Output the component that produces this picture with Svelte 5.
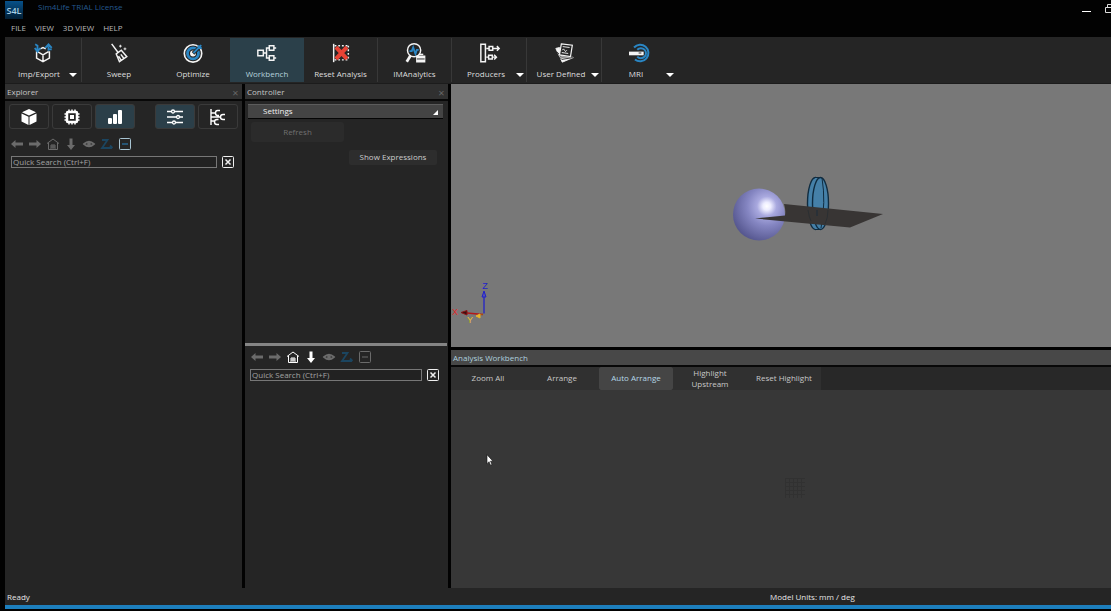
<script lang="ts">
  const menus = ['FILE', 'VIEW', '3D VIEW', 'HELP'];

  const tools = [
    { id: 'io', label: 'Imp/Export', menu: true },
    { id: 'sweep', label: 'Sweep' },
    { id: 'optimize', label: 'Optimize' },
    { id: 'workbench', label: 'Workbench' },
    { id: 'reset', label: 'Reset Analysis' },
    { id: 'ima', label: 'IMAnalytics' },
    { id: 'producers', label: 'Producers', menu: true },
    { id: 'user', label: 'User Defined', menu: true },
    { id: 'mri', label: 'MRI', menu: true }
  ];

  const actions = ['Zoom All', 'Arrange', 'Auto Arrange', 'Highlight Upstream', 'Reset Highlight'];

  let activeTool = $state('workbench');
  let activeAction = $state('Auto Arrange');
  let explorerSearch = $state('');
  let controllerSearch = $state('');
</script>

{#snippet toolIcon(id: string)}
  <svg class="tool-icon" viewBox="0 0 24 24" fill="none" stroke="#f4f4f4" stroke-width="1.6" aria-hidden="true">
    {#if id === 'io'}
      <path d="M9 7.5 12 6l3 1.500M5 10v7.500l7 4 7-4V10M6 10.500l6 3.500 6-3.500M12 14v7.500" />
      <path d="M3.500 2.500 6 4v5M3 6.500 6 10.500l3-4M18 9.500V4.500M14.500 6.500 18 2.500l3.500 4M18 8l3.500 0" stroke="#2a86c4" stroke-width="2" />
    {:else if id === 'sweep'}
      <path d="M4 2l7 9.500M9 13l5.500-4 6 7-8 5.500zM11.500 15.500l3 4.500M14 13.500l3 4" />
      <path d="M13.500 3v3M12 4.500h3M18.500 6v3M17 7.500h3" stroke-width="1" />
    {:else if id === 'optimize'}
      <circle cx="12" cy="12.500" r="9.500" stroke-width="1.800" />
      <circle cx="12" cy="12.500" r="6" stroke="#2a86c4" stroke-width="3" />
      <circle cx="12" cy="12.500" r="2.400" fill="#f4f4f4" />
      <path d="M12 12.500 20 5" stroke="#252525" stroke-width="4" />
      <path d="M12.500 12 18 6.500V3.500M18 6.500h3.500M18 6.500l3-3" stroke="#2a86c4" stroke-width="2" />
    {:else if id === 'workbench'}
      <path d="M2 9h6v6H2zM14.500 4h5v5h-5zM14.500 15h5v5h-5zM8 12h3.500M14.500 6.500h-3v11h3M19.500 6.500H22M19.500 17.500H22" />
    {:else if id === 'reset'}
      <path d="M4 2v20" />
      <path d="M5 4h15M5 19.500h15M20 4v15" stroke-dasharray="2 2" />
      <path d="m6.500 5.500 12 13M18.500 5.500l-12 13" stroke="#e84335" stroke-width="4.500" />
    {:else if id === 'ima'}
      <circle cx="11" cy="9" r="7.200" />
      <path d="M6 10h2.500L10 6l2.500 7L14 8.500h2" stroke="#2a86c4" stroke-width="2" />
      <path d="m7 15-4 6.500" stroke-width="3" />
      <path d="M14 15.500h8.500v6H14z" fill="#f4f4f4" />
      <path d="M14 18.500h8.500" stroke="#252525" stroke-width="1" />
      <path d="M16 13.500h5" />
    {:else if id === 'producers'}
      <path d="M2 2.500h5v19H2zM8 7h3M11 5h4v4h-4zM15 7h7M19.500 4.500 22 7l-2.500 2.500M8 16.500h2.500M10.500 14.500h4v4h-4zM14.500 16.500h4M16.500 14l2.500 2.500L16.500 19" />
    {:else if id === 'user'}
      <path d="M2 7l4-1 2 9 11 1 2 1-12 5z" fill="#f4f4f4" stroke-width="1" />
      <path d="M3.500 11 8 16.500l12-.5M5 15.500l3.500 3.500 12-2" stroke="#252525" stroke-width="1" />
      <path d="m8 2 12 1.500-2 12.500-12-2z" fill="#252525" stroke-width="1.300" />
      <path d="M9.500 5l7.500 1M9 9q1.500-3 2.500 0t2.500 0M8.500 11.500l7 1" stroke-width="1" />
    {:else}
      <path d="M5.500 6a9 9 0 1 1 1 13M9 8.500a5.500 5.500 0 1 1 0 7.500" stroke="#2a86c4" stroke-width="2.200" />
      <path d="M0 12.500h16" stroke-width="4" />
      <path d="M10.500 12h3" stroke="#252525" stroke-width="1" />
    {/if}
  </svg>
{/snippet}

{#snippet treeTools(current: string)}
  <div class="tree-tools {current}">
    <button aria-label="Back"><svg viewBox="0 0 14 14"><path d="M1 7l4.500-4v2.500H13v3H5.500V11z" fill="currentColor" /></svg></button>
    <button aria-label="Forward"><svg viewBox="0 0 14 14"><path d="M13 7 8.500 3v2.500H1v3h7.500V11z" fill="currentColor" /></svg></button>
    <button class="nav" aria-label="Home"><svg viewBox="0 0 14 14" fill="none" stroke="currentColor"><path d="M1 6.500 7 2l6 4.500M2.500 6v6.500h9V6M5 12V8h4v4M5 10h4M7 8v4" /></svg></button>
    <button class="nav" aria-label="Go down"><svg viewBox="0 0 14 14"><path d="M5.500 1.500h3V8H11l-4 5-4-5h2.500z" fill="currentColor" /></svg></button>
    <button aria-label="Visibility"><svg viewBox="0 0 14 14" fill="none" stroke="currentColor" stroke-width="1.800"><path d="M2 7q5-4.500 10 0-5 4.500-10 0z" /><circle cx="7" cy="7" r="1" /></svg></button>
    <button class="sort" aria-label="Sort"><svg viewBox="0 0 14 14" fill="none" stroke="currentColor" stroke-width="1.800"><path d="M2 3h5.500L2 11h10M10 8.500l2.500 2.500" /></svg></button>
    <button class="collapse" aria-label="Collapse all"><svg viewBox="0 0 14 14" fill="none" stroke="currentColor"><rect x="1.500" y="1.500" width="11" height="11" rx="1" /><path class="dash" d="M4 7h6" /></svg></button>
  </div>
{/snippet}

{#snippet clearIcon()}
  <svg viewBox="0 0 12 12" fill="none" stroke="#f0f0f0"><rect x=".5" y=".5" width="11" height="11" rx="1" /><path d="m3.500 3.500 5 5M8.500 3.500l-5 5" stroke-width="1.500" /></svg>
{/snippet}

<div class="app">
  <header class="title-bar">
    <svg class="logo" viewBox="0 0 18 18" aria-hidden="true">
      <defs>
        <linearGradient id="logo-fill" x2="0" y2="1">
          <stop offset="0" stop-color="#07518a" />
          <stop offset="1" stop-color="#021f35" />
        </linearGradient>
      </defs>
      <rect width="18" height="18" fill="url(#logo-fill)" />
      <text x="9" y="13" text-anchor="middle">S4L</text>
    </svg>
    <span class="title">Sim4Life TRIAL License</span>
    <button class="window-button" aria-label="Minimize"><svg viewBox="0 0 12 12"><path d="M2 7.500h9" stroke="#fff" /></svg></button>
    <button class="window-button restore" aria-label="Restore"><svg viewBox="0 0 12 12" fill="none" stroke="#ddd"><path d="M1.500 3.500h6v5h-6zM3.500 3V.5h6V6H8" /></svg></button>
  </header>

  <nav class="menu-bar">
    {#each menus as menu}
      <button>{menu}</button>
    {/each}
  </nav>

  <div class="toolbar">
    {#each tools as tool}
      <button class="tool {tool.id}" class:menu={tool.menu} class:active={activeTool === tool.id} onclick={() => (activeTool = tool.id)}>
        {@render toolIcon(tool.id)}
        <span>{tool.label}</span>
        {#if tool.menu}<i class="caret"></i>{/if}
      </button>
    {/each}
  </div>

  <main>
    <section class="panel">
      <h2>Explorer <button class="close" aria-label="Close Explorer">×</button></h2>
      <div class="tabs">
        <button aria-label="Model"><svg viewBox="0 0 18 18" fill="#fff"><path d="M9 1l7 3.300-7 3.200-7-3.200zM1.500 5.500l7 3.200V17l-7-3.500zM16.500 5.500l-7 3.200V17l7-3.500z" /></svg></button>
        <button aria-label="Simulation"><svg viewBox="0 0 18 18" fill="none" stroke="#fff"><rect x="4" y="4" width="10" height="10" rx="1" stroke-width="2.500" /><rect x="7.500" y="7.500" width="3" height="3" fill="#fff" /><path d="M6 1.500v2M9 1.500v2M12 1.500v2M6 14.500v2M9 14.500v2M12 14.500v2M1.500 6h2M1.500 9h2M1.500 12h2M14.500 6h2M14.500 9h2M14.500 12h2" stroke-width="1.500" /></svg></button>
        <button class="active" aria-label="Analysis"><svg viewBox="0 0 18 18" fill="#fff"><rect x="2" y="10" width="4" height="6" rx="1" /><rect x="7" y="6" width="4" height="10" rx="1" /><rect x="12" y="2" width="4" height="14" rx="1" /></svg></button>
        <button class="active spaced" aria-label="Properties"><svg viewBox="0 0 18 18" fill="none" stroke="#fff" stroke-width="1.300"><path d="M1 3.500h4M9 3.500h8M1 9h9M14 9h3M1 14.500h5M10 14.500h7" /><circle cx="7" cy="3.500" r="1.500" /><circle cx="12" cy="9" r="1.500" /><circle cx="8" cy="14.500" r="1.500" /></svg></button>
        <button aria-label="Tree"><svg viewBox="0 0 18 18" fill="none" stroke="#fff" stroke-width="1.400"><path d="M2 1v16M2 5h4M2 9h9M2 13h3M11 2.500H8.500q-2 0-2 2.500t2 2.500H10M16 6.500h-2q-2.500 0-2.500 2.500t2.500 2.500h2M9.500 11.500H8q-2.500 0-2.500 2.500T8 16.500h2" /></svg></button>
      </div>
      {@render treeTools('explorer-tree')}
      <div class="search">
        <input bind:value={explorerSearch} placeholder="Quick Search (Ctrl+F)" aria-label="Quick search in Explorer" />
        <button aria-label="Clear search" onclick={() => (explorerSearch = '')}>{@render clearIcon()}</button>
      </div>
    </section>

    <section class="panel controller">
      <div class="controls">
        <h2>Controller <button class="close" aria-label="Close Controller">×</button></h2>
        <button class="settings">Settings <svg viewBox="0 0 6 6"><path d="M6 0v6H0z" fill="#fff" /></svg></button>
        <button class="refresh" disabled>Refresh</button>
        <button class="expressions">Show Expressions</button>
      </div>
      <div class="splitter"></div>
      <div class="tree">
        {@render treeTools('controller-tree')}
        <div class="search">
          <input bind:value={controllerSearch} placeholder="Quick Search (Ctrl+F)" aria-label="Quick search in Controller" />
          <button aria-label="Clear search" onclick={() => (controllerSearch = '')}>{@render clearIcon()}</button>
        </div>
      </div>
    </section>

    <div class="workspace">
      <section class="viewport" aria-label="3D view">
        <svg viewBox="0 0 660 263" preserveAspectRatio="xMidYMid slice">
          <defs>
            <radialGradient id="ball" cx="0.65" cy="0.34" r="0.75">
              <stop offset="0" stop-color="#ffffff" />
              <stop offset="0.1" stop-color="#ededff" />
              <stop offset="0.25" stop-color="#a9a9df" />
              <stop offset="0.5" stop-color="#8586c2" />
              <stop offset="1" stop-color="#505189" />
            </radialGradient>
          </defs>
          <g fill="#4580a8" stroke="#102c40" stroke-width="1.400">
            <ellipse cx="364.500" cy="119.500" rx="8" ry="26" />
            <path d="M364 93.500h6v52h-6z" stroke="none" />
            <ellipse cx="369.500" cy="119.500" rx="8" ry="26" />
            <path d="M364 93.500h6M364 145.500h6M371 94q4 24-1 50" fill="none" stroke-width="1" />
          </g>
          <circle cx="308" cy="130.500" r="26" fill="url(#ball)" />
          <path d="M304 134.500 334 131.500Q335 126 333 120L432 130 399 143.500z" fill="#383534" />
          <path d="M357 126q1 7 3 11M377 126q0 8-3 14" stroke="#2b2f32" fill="none" />
          <path d="M366 126v6" stroke="#1b2c3a" />
          <g class="axes">
            <path d="M33 229.500V208" stroke="#2222c8" stroke-width="1.300" />
            <path d="M33 207l2 6h-4z" fill="#5555b0" stroke="#2222c8" />
            <path d="M32 230.500 16 229" stroke="#b51818" stroke-width="1.500" />
            <path d="M10 228.500l6-2v4.500z" fill="#3a1010" stroke="#8c1515" />
            <path d="M32 230l-4 1.500" stroke="#a85b10" />
            <path d="M25 232l4-2v4z" fill="#e8b529" stroke="#e8b529" />
            <text x="4" y="231" text-anchor="middle" fill="#e02828">X</text>
            <text x="34" y="205" text-anchor="middle" fill="#2222c8">Z</text>
            <text x="19" y="239" text-anchor="middle" fill="#e8c02a">Y</text>
          </g>
        </svg>
      </section>
      <section class="analysis">
        <h2>Analysis Workbench</h2>
        <div class="actions">
          {#each actions as action}
            <button class:active={activeAction === action} onclick={() => (activeAction = action)}>{action}</button>
          {/each}
        </div>
        <div class="canvas">
          <div class="grid-mark"></div>
          <svg class="pointer" viewBox="0 0 8 12"><path d="M1 .7v9l2-2 1.500 3.500 1.500-.7L4.500 7.200H7z" fill="#fff" stroke="#111" stroke-width=".6" /></svg>
        </div>
      </section>
    </div>
  </main>

  <footer>
    <span>Ready</span>
    <span>Model Units: mm / deg</span>
  </footer>
</div>

<style>
  :global(body) {
    background: #000;
  }

  .app {
    display: grid;
    grid-template-rows: 20px 17px 47px minmax(0, 1fr) 23px;
    height: 100vh;
    padding-left: 5px;
    box-sizing: border-box;
    overflow: hidden;
    background: #020202;
    color: #dedede;
    font: 8px/11px "Open Sans", "Noto Sans", sans-serif;
  }

  button,
  input {
    box-sizing: border-box;
    margin: 0;
    padding: 0;
    border: 0;
    background: none;
    color: inherit;
    font: inherit;
  }

  svg {
    display: block;
  }

  h2 {
    display: flex;
    justify-content: space-between;
    box-sizing: border-box;
    height: 17px;
    margin: 0;
    padding: 2px 2px 0;
    border-bottom: 2px solid #080808;
    background: #303030;
    color: #c4c4c4;
    font-size: 8px;
    font-weight: 400;
  }

  .title-bar {
    display: flex;
    align-items: flex-start;
  }

  .logo {
    width: 18px;
    height: 18px;
    margin-top: 1px;
  }

  .logo text {
    fill: #a8cfe2;
    font: 600 9px "Open Sans", sans-serif;
  }

  .title {
    flex: 1;
    margin: 1px 0 0 15px;
    color: #24598f;
  }

  .window-button {
    width: 12px;
    margin: 4px 12px 0 0;
  }

  .restore {
    width: 7px;
    margin-right: 0;
    overflow: hidden;
  }

  .restore svg {
    width: 12px;
  }

  .menu-bar {
    display: flex;
    align-items: center;
    gap: 9px;
    padding: 0 0 2px 6px;
    color: #b8b8b8;
  }

  .toolbar {
    display: flex;
    border-bottom: 1px solid #1c1c1c;
    background: #252525;
  }

  .tool {
    display: grid;
    grid-template-rows: 28px 13px;
    align-content: start;
    justify-items: center;
    align-items: center;
    width: 74px;
    margin: 1px 0;
    padding-top: 1px;
    white-space: nowrap;
  }

  .tool.menu {
    grid-template-columns: 60px 8px;
    justify-content: start;
    width: 75px;
    padding-left: 4px;
  }

  .tool.menu .tool-icon {
    grid-column: 1 / 3;
  }

  .tool.io {
    width: 77px;
    border-right: 1px solid #383838;
  }

  .reset,
  .ima,
  .producers,
  .user {
    border-right: 1px solid #383838;
  }

  .tool.active {
    background: #2b404a;
    color: #b6d2dd;
  }

  .tool-icon {
    width: 22px;
    height: 22px;
  }

  .caret {
    justify-self: end;
    margin-top: 2px;
    border: 4px solid transparent;
    border-top-color: #fff;
    border-bottom: 0;
  }

  main {
    display: grid;
    grid-template-columns: 237px 203px minmax(0, 1fr);
    gap: 3px;
  }

  .panel {
    background: #252525;
  }

  .close {
    width: 9px;
    color: #666;
    font-size: 11px;
  }

  .tabs {
    display: flex;
    gap: 3px;
    padding: 3px 0 0 4px;
  }

  .tabs button {
    display: grid;
    place-items: center;
    width: 40px;
    height: 25px;
    border: 1px solid #3a3a3a;
    border-radius: 3px;
  }

  .tabs .active {
    background: #2b3f49;
  }

  .tabs .spaced {
    margin-left: 17px;
  }

  .tabs svg {
    width: 18px;
    height: 18px;
  }

  .tree-tools {
    display: flex;
    gap: 4px;
    padding: 8px 0 5px 5px;
    color: #6b6b6b;
  }

  .tree-tools button,
  .tree-tools svg {
    width: 14px;
    height: 14px;
  }

  .tree-tools .sort {
    color: #1b4560;
  }

  .explorer-tree .collapse {
    color: #a8c4d2;
  }

  .explorer-tree .dash {
    stroke: #2a86c4;
  }

  .controller-tree {
    padding-top: 4px;
  }

  .controller-tree .nav {
    color: #fff;
  }

  .search {
    display: flex;
    gap: 5px;
    padding: 0 9px 0 5px;
  }

  .search input {
    flex: 1;
    min-width: 0;
    height: 12px;
    padding: 0 1px 2px;
    border: 1px solid #777;
    background: #222;
  }

  .search input::placeholder {
    color: #a2a2a2;
    opacity: 1;
  }

  .search button {
    width: 12px;
    height: 12px;
  }

  .explorer-tree + .search {
    padding: 0 8px 0 6px;
  }

  .controller {
    display: grid;
    grid-template-rows: minmax(0, 259fr) 3px minmax(0, 242fr);
  }

  .controls {
    display: flex;
    flex-direction: column;
  }

  .settings {
    display: flex;
    align-items: center;
    justify-content: space-between;
    height: 15px;
    margin: 3px 5px 0 3px;
    padding: 0 5px 2px 15px;
    border-top: 1px solid #5c5c5c;
    border-bottom: 1px solid #050505;
    background: #444;
    color: #f0f0f0;
  }

  .settings svg {
    width: 5px;
    height: 5px;
    margin-top: 4px;
  }

  .refresh {
    width: 93px;
    height: 20px;
    margin: 3px 0 0 6px;
    padding-bottom: 2px;
    border-radius: 3px;
    background: #2b2b2b;
    color: #707070;
  }

  .expressions {
    align-self: flex-end;
    width: 88px;
    height: 15px;
    margin: 8px 11px 0 0;
    padding-bottom: 2px;
    border-radius: 2px;
    background: #2d2d2d;
    color: #ccc;
  }

  .splitter {
    margin-right: 1px;
    background: #858585;
  }

  .workspace {
    display: grid;
    grid-template-rows: minmax(0, 263fr) minmax(0, 238fr);
    gap: 3px;
  }

  .viewport {
    background: #787878;
  }

  .viewport svg {
    width: 100%;
    height: 100%;
  }

  .axes text {
    font: 9px "Liberation Sans", Arial, sans-serif;
  }

  .analysis {
    display: flex;
    flex-direction: column;
  }

  .analysis h2 {
    background: #484848;
    color: #aed0df;
  }

  .actions {
    display: flex;
    height: 23px;
    background: #282828;
  }

  .actions button {
    width: 74px;
    padding: 0 12px 2px;
    background: #303030;
    color: #c8c8c8;
  }

  .actions button:last-child {
    padding: 0 4px 2px;
  }

  .actions .active {
    padding: 0 4px 2px;
    border-radius: 2px;
    background: #454545;
    color: #b5d8e8;
  }

  .canvas {
    position: relative;
    flex: 1;
    background: #373737;
  }

  .grid-mark {
    position: absolute;
    top: 88px;
    left: 334px;
    width: 20px;
    height: 20px;
    opacity: 0.5;
    background:
      repeating-linear-gradient(90deg, #2c2c2c 0 1px, transparent 1px 4px),
      repeating-linear-gradient(#2c2c2c 0 1px, transparent 1px 4px);
  }

  .pointer {
    position: absolute;
    top: 64px;
    left: 35px;
    width: 8px;
    height: 12px;
  }

  footer {
    display: grid;
    grid-template-columns: 765fr 341fr;
    align-items: center;
    border-bottom: 4px solid #1d7fbd;
    margin-bottom: 2px;
    background: #252525;
    color: #e6e6e6;
  }

  footer span:first-child {
    padding-left: 2px;
  }
</style>
